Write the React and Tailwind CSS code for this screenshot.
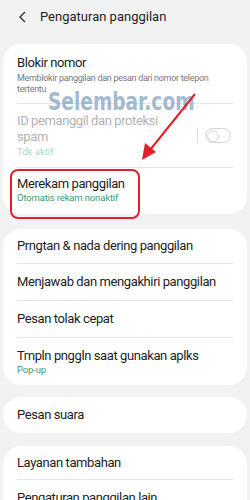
import React from 'react';

const Divider = () => <div className="h-px bg-[#e6e6e6]" />;

const Row = ({ title, sub, subColor = 'text-[#3a9c78]', className = '' }) => (
  <div className={`flex flex-col justify-center ${className}`}>
    <div className="text-[13px] leading-[16px] tracking-[-0.4px] text-[#1e1e1e]">{title}</div>
    {sub && <div className={`text-[9.5px] leading-[12px] tracking-[-0.15px] ${subColor}`}>{sub}</div>}
  </div>
);

export default function App() {
  return (
    <div className="relative w-[250px] h-[500px] overflow-hidden bg-[#f2f2f2] font-['Roboto',sans-serif]">
      {/* Header */}
      <div className="flex h-[33px] items-center pl-[18px]">
        <svg width="9" height="12" viewBox="0 0 9 12" className="mr-[13px]">
          <path d="M7 1 L2 6 L7 11" fill="none" stroke="#333" strokeWidth="1.4" />
        </svg>
        <span className="text-[13px] text-[#1e1e1e]">Pengaturan panggilan</span>
      </div>

      {/* Card 1 */}
      <div className="mx-[3px] mt-[11px] rounded-[18px] bg-white px-[14px]">
        <div className="h-[59px] pt-[11px]">
          <div className="text-[13px] leading-[16px] tracking-[-0.4px] text-[#1e1e1e]">Blokir nomor</div>
          <div className="mt-[2px] text-[9px] leading-[11px] tracking-[-0.3px] text-[#7a7a7a]">
            Memblokir panggilan dan pesan dari nomor telepon tertentu
          </div>
        </div>
        <Divider />
        <div className="flex h-[63px] items-center">
          <div className="flex-1">
            <div className="text-[13px] leading-[16px] tracking-[-0.4px] text-[#b3b3b3]">
              ID pemanggil dan proteksi
              <br />
              spam
            </div>
            <div className="text-[9.5px] leading-[13px] text-[#a8d8c5]">Tdk aktif</div>
          </div>
          <div className="mr-[7px] h-[15px] w-px bg-[#dcdcdc]" />
          <div className="relative mr-[2px] h-[15px] w-[26px] rounded-full border border-[#d4d4d4]">
            <div className="absolute left-[1px] top-[0.5px] h-[12px] w-[12px] rounded-full border border-[#d4d4d4]" />
          </div>
        </div>
        <Divider />
        <Row title="Merekam panggilan" sub="Otomatis rekam nonaktif" className="h-[46px] pb-[2px]" />
      </div>

      {/* Card 2 */}
      <div className="mx-[3px] mt-[15px] rounded-[18px] bg-white px-[14px]">
        <Row title="Prngtan & nada dering panggilan" className="h-[34px]" />
        <Divider />
        <Row title="Menjawab dan mengakhiri panggilan" className="h-[36px]" />
        <Divider />
        <Row title="Pesan tolak cepat" className="h-[36px]" />
        <Divider />
        <Row title="Tmpln pnggln saat gunakan aplks" sub="Pop-up" className="h-[47px]" />
      </div>

      {/* Card 3 */}
      <div className="mx-[3px] mt-[12px] rounded-[18px] bg-white px-[14px]">
        <Row title="Pesan suara" className="h-[36px]" />
      </div>

      {/* Card 4 */}
      <div className="mx-[3px] mt-[13px] rounded-[18px] bg-white px-[14px]">
        <Row title="Layanan tambahan" className="h-[33px]" />
        <Divider />
        <Row title="Pengaturan panggilan lain" className="h-[36px]" />
      </div>

      {/* Watermark */}
      <div className="pointer-events-none absolute left-[48px] top-[88px] origin-left scale-x-[0.86] font-['DejaVu_Sans_Condensed','DejaVu_Sans',sans-serif] text-[24px] font-bold leading-[28px] text-[#8fa9c4] opacity-80">
        Selembar.com
      </div>

      {/* Red arrow */}
      <svg className="pointer-events-none absolute left-0 top-0" width="250" height="500">
        <line x1="195" y1="94" x2="150" y2="150" stroke="#e0202a" strokeWidth="2" />
        <polygon points="142,160 145,143 156,152" fill="#e0202a" />
      </svg>

      {/* Red highlight box */}
      <div className="pointer-events-none absolute left-[10px] top-[169px] h-[50px] w-[130px] rounded-[8px] border-2 border-[#e0202a]" />
    </div>
  );
}
